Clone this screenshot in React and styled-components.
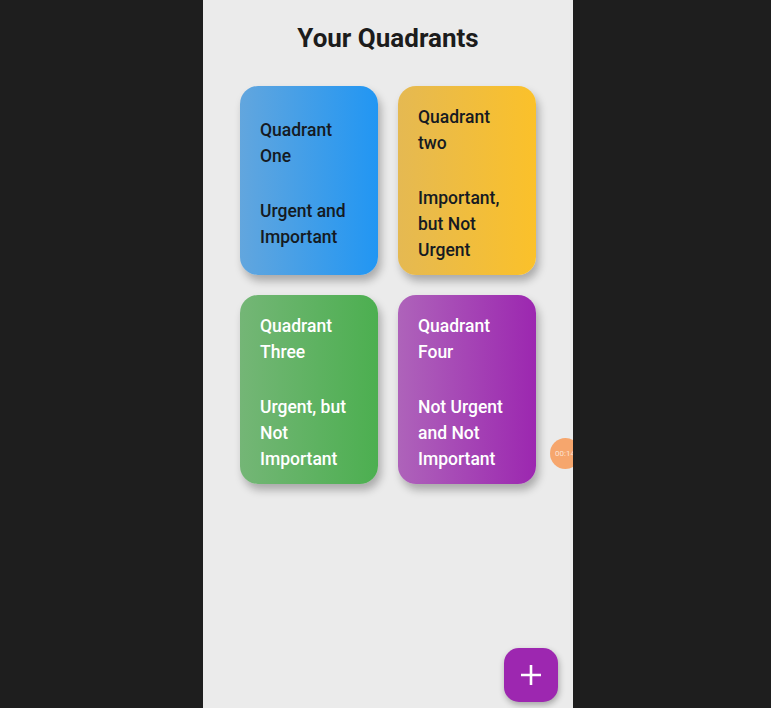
import React from "react";
import styled, { createGlobalStyle } from "styled-components";

const Global = createGlobalStyle`
  html, body { margin: 0; padding: 0; background: #1e1e1e; }
  body { font-family: Roboto, "Noto Sans", sans-serif; }
`;

const Stage = styled.div`
  width: 771px;
  height: 708px;
  background: #1e1e1e;
  overflow: hidden;
`;

const Phone = styled.div`
  position: relative;
  margin-left: 203px;
  width: 370px;
  height: 708px;
  background: #ebebeb;
  overflow: hidden;
  display: flex;
  flex-direction: column;
  align-items: center;
`;

const Title = styled.h1`
  margin: 20px 0 0;
  font-family: Roboto, sans-serif;
  font-weight: 700;
  font-size: 26px;
  line-height: 36px;
  color: #1c1c1c;
`;

const Grid = styled.div`
  margin-top: 30px;
  display: grid;
  grid-template-columns: 138px 138px;
  gap: 20px;
`;

const Card = styled.div`
  height: 189px;
  border-radius: 18px;
  box-sizing: border-box;
  padding: 6px 14px 0 20px;
  display: flex;
  flex-direction: column;
  justify-content: center;
  gap: 29px;
  background: linear-gradient(to right, ${(p) => p.$from}, ${(p) => p.$to});
  box-shadow: 3px 6px 8px rgba(0, 0, 0, 0.28);
  color: ${(p) => (p.$light ? "#ffffff" : "#151a22")};
  font-family: Roboto, sans-serif;
  font-weight: 500;
  font-size: 17.5px;
  line-height: 26px;
`;

const Para = styled.div``;

const Line = styled.div``;

const Timer = styled.div`
  position: absolute;
  left: 347px;
  top: 438px;
  width: 31px;
  height: 31px;
  border-radius: 50%;
  background: #f6a66d;
  color: rgba(255, 255, 255, 0.7);
  font-family: Roboto, sans-serif;
  font-size: 8px;
  display: flex;
  align-items: center;
  padding-left: 5px;
  box-sizing: border-box;
  white-space: nowrap;
`;

const Fab = styled.button`
  position: absolute;
  left: 301px;
  top: 648px;
  width: 54px;
  height: 54px;
  border: none;
  border-radius: 15px;
  background: #9d27b0;
  box-shadow: 1px 3px 6px rgba(0, 0, 0, 0.3);
  display: flex;
  align-items: center;
  justify-content: center;
  padding: 0;
`;

const cards = [
  { from: "#62a6de", to: "#2196f3", title: ["Quadrant", "One"], desc: ["Urgent and", "Important"] },
  { from: "#e5b952", to: "#fbc12a", title: ["Quadrant", "two"], desc: ["Important,", "but Not", "Urgent"] },
  { from: "#74b676", to: "#4caf50", title: ["Quadrant", "Three"], desc: ["Urgent, but", "Not", "Important"], light: true },
  { from: "#ae63ba", to: "#9c27b0", title: ["Quadrant", "Four"], desc: ["Not Urgent", "and Not", "Important"], light: true },
];

export default function App() {
  return (
    <Stage>
      <Global />
      <Phone>
        <Title>Your Quadrants</Title>
        <Grid>
          {cards.map((c, i) => (
            <Card key={i} $from={c.from} $to={c.to} $light={c.light}>
              <Para>
                {c.title.map((l, j) => (
                  <Line key={j}>{l}</Line>
                ))}
              </Para>
              <Para>
                {c.desc.map((l, j) => (
                  <Line key={j}>{l}</Line>
                ))}
              </Para>
            </Card>
          ))}
        </Grid>
        <Timer>00:14</Timer>
        <Fab aria-label="add">
          <svg width="24" height="24" viewBox="0 0 24 24">
            <path d="M12 2v20M2 12h20" stroke="#fff" strokeWidth="2.6" />
          </svg>
        </Fab>
      </Phone>
    </Stage>
  );
}
